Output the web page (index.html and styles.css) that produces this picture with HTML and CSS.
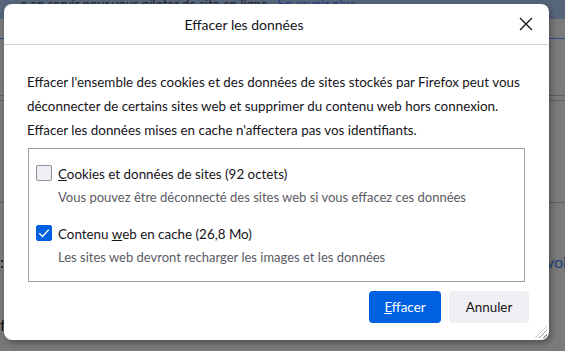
FILE: index.html
```html
<!DOCTYPE html>
<html lang="fr">
<head>
    <meta charset="UTF-8">
    <title>Effacer les données</title>
    <link rel="stylesheet" href="styles.css">
</head>
<body>
    <div class="page">
        <div class="page-top">e en servir pour vous piloter de site en ligne · <span class="page-link">En savoir plus</span></div>
        <div class="page-rule blue"></div>
        <div class="page-rule r1"></div>
        <div class="page-rule r2"></div>
        <div class="page-rule r3"></div>
        <span class="page-frag f1">:</span>
        <span class="page-frag f2">f</span>
        <span class="page-frag f3">voi</span>

        <div class="dialog">
            <div class="dialog-header">
                <h1 class="dialog-title">Effacer les données</h1>
                <button class="close-btn" aria-label="Fermer">
                    <svg width="14" height="14" viewBox="0 0 14 14"><path d="M1 1 L13 13 M13 1 L1 13" stroke="#15141a" stroke-width="1.3" fill="none"/></svg>
                </button>
            </div>
            <div class="dialog-body">
                <p class="intro">Effacer l'ensemble des cookies et des données de sites stockés par Firefox peut vous déconnecter de certains sites web et supprimer du contenu web hors connexion. Effacer les données mises en cache n'affectera pas vos identifiants.</p>
                <div class="options">
                    <label class="option">
                        <span class="check"></span>
                        <span class="option-text">
                            <span class="option-label"><u>C</u>ookies et données de sites (92 octets)</span>
                            <span class="option-desc">Vous pouvez être déconnecté des sites web si vous effacez ces données</span>
                        </span>
                    </label>
                    <label class="option">
                        <span class="check checked">
                            <svg width="16" height="16" viewBox="0 0 16 16"><path d="M3.2 8.2 L6.6 11.4 L12.8 4.6" stroke="#fff" stroke-width="1.4" fill="none"/></svg>
                        </span>
                        <span class="option-text">
                            <span class="option-label">Contenu <u>w</u>eb en cache (26,8 Mo)</span>
                            <span class="option-desc">Les sites web devront recharger les images et les données</span>
                        </span>
                    </label>
                </div>
                <div class="actions">
                    <button class="btn primary"><u>E</u>ffacer</button>
                    <button class="btn cancel">Annuler</button>
                </div>
            </div>
            <div class="grip"></div>
        </div>
    </div>
</body>
</html>
```

FILE: styles.css
```css
* { margin: 0; padding: 0; box-sizing: border-box; }
body { width: 565px; height: 351px; overflow: hidden; font-family: Lato, 'Noto Sans', sans-serif; color: #15141a; }
.page { position: relative; width: 565px; height: 351px; background: #7a7a7b; padding: 4px 0 0 4px; }
.page-top { position: absolute; left: 0; top: 0; width: 565px; height: 19px; background: #56657a; color: #1d2430; font-size: 13px; line-height: 8px; white-space: nowrap; padding-left: 20px; }
.page-link { color: #1f3f7a; }
.page-rule { position: absolute; left: 0; right: 0; height: 1px; background: #5f5f60; }
.page-rule.blue { top: 38px; background: #2b4f8e; }
.page-rule.r1 { top: 95px; }
.page-rule.r2 { top: 100px; }
.page-rule.r3 { top: 202px; }
.page-frag { position: absolute; font-size: 16px; line-height: 18px; color: #111; }
.page-frag.f1 { left: 0; top: 253px; }
.page-frag.f2 { left: 0; top: 316px; }
.page-frag.f3 { left: 546px; top: 253px; color: #1f3f7a; }

.dialog { position: relative; width: 545px; height: 336px; background: #fff; border-radius: 8px; box-shadow: 2px 3px 6px rgba(0, 0, 0, 0.35); overflow: hidden; }
.dialog-header { display: flex; align-items: center; height: 41px; border-bottom: 1px solid #d4d4d6; }
.dialog-title { flex: 1; text-align: center; font-size: 14px; font-weight: 400; padding-right: 26px; padding-top: 1px; }
.close-btn { width: 32px; height: 32px; margin-right: 7px; background: none; border: none; display: flex; align-items: center; justify-content: center; }
.dialog-body { padding: 25px 24px 0 23px; }
.intro { font-size: 13.4px; line-height: 24px; }
.options { margin: 6px 0 0 1px; border: 1px solid #9f9fa3; padding: 16px 7px 12px; display: flex; flex-direction: column; gap: 19px; height: 134px; }
.option { display: flex; align-items: flex-start; gap: 6px; }
.check { width: 16px; height: 16px; border: 1px solid #8f8f9d; border-radius: 2px; background: #f0f0f4; flex-shrink: 0; }
.check.checked { background: #0061e0; border-color: #0061e0; }
.check svg { display: block; margin: -1px; }
.option-text { display: flex; flex-direction: column; }
.option-label { font-size: 13.4px; line-height: 18px; }
.option-desc { font-size: 13px; line-height: 18px; color: #5b5b66; margin-top: 5px; }
.actions { display: flex; justify-content: flex-end; gap: 8px; margin-top: 9px; margin-right: -4px; }
.btn { height: 32px; border: none; border-radius: 4px; background: #f0f0f4; color: #15141a; font-family: inherit; font-size: 13.4px; }
.btn.primary { width: 72px; background: #0061e0; color: #fff; }
.btn.cancel { width: 80px; }
.btn u { text-decoration-thickness: 1px; }
.grip { position: absolute; right: 2px; bottom: 2px; width: 12px; height: 12px; background: repeating-linear-gradient(135deg, transparent 0 2px, #9a9a9a 2px 3px); clip-path: polygon(100% 0, 100% 100%, 0 100%); }
```
